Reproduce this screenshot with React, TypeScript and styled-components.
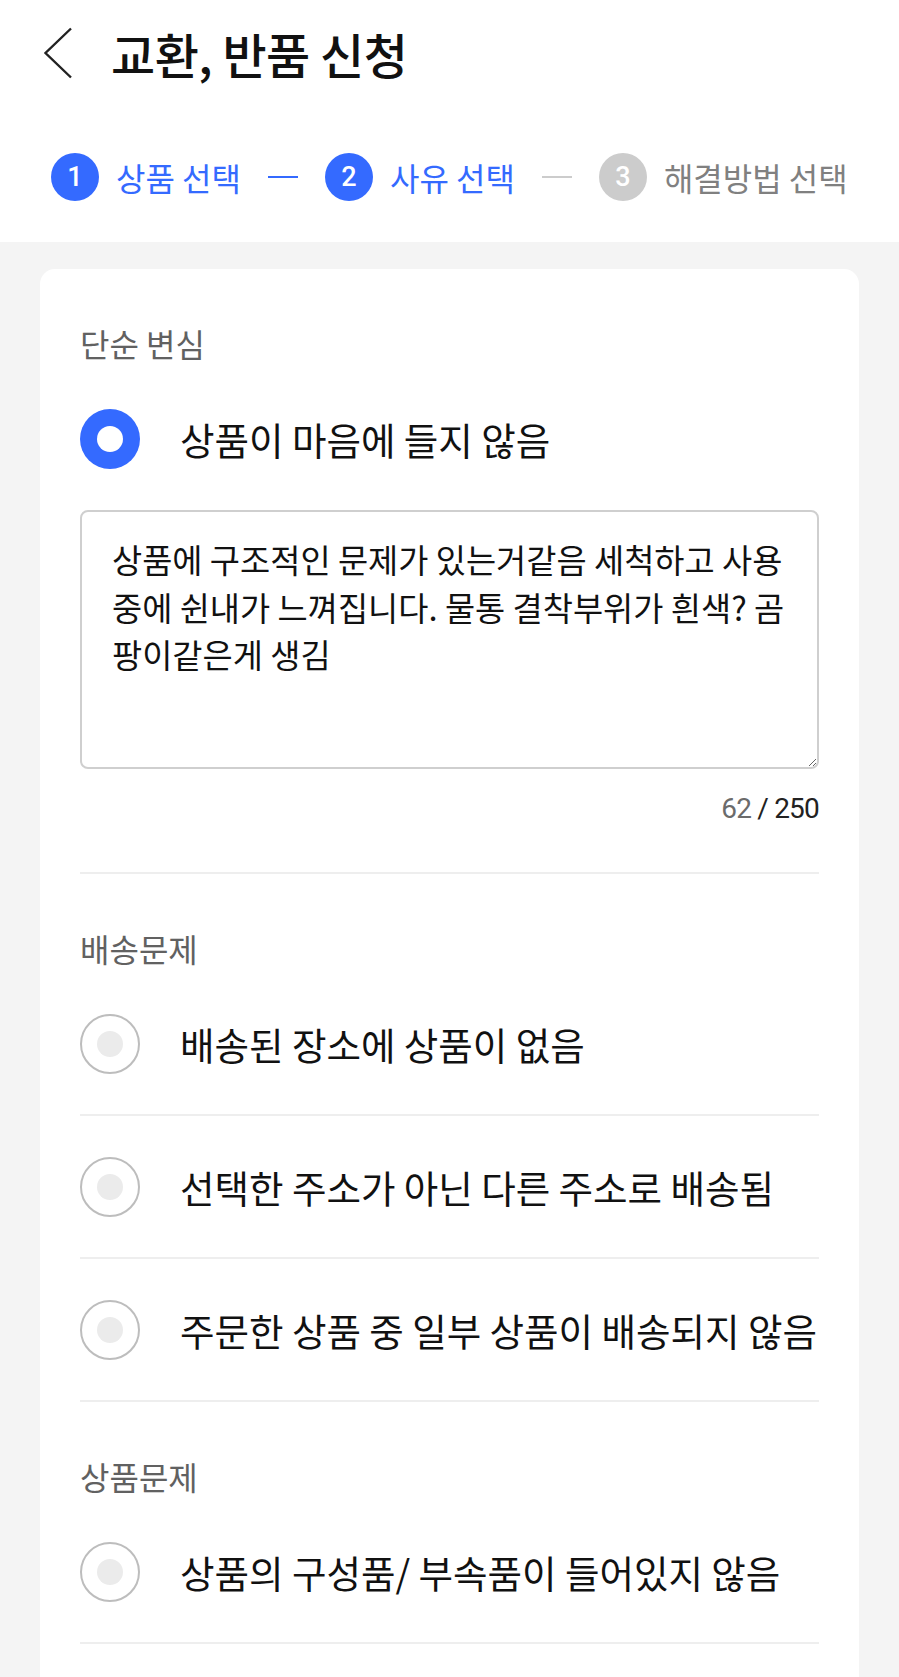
import React from 'react'
import styled, {createGlobalStyle} from 'styled-components'

const BLUE = '#346aff'

const GlobalStyle = createGlobalStyle`
  html, body {
    margin: 0;
    padding: 0;
    background: #f4f4f4;
  }
  body {
    font-family: 'Roboto', 'Noto Sans CJK KR', sans-serif;
    color: #111;
  }
  * { box-sizing: border-box; }
`

const Header = styled.header`
  background: #fff;
  height: 242px;
`

const TopBar = styled.div`
  height: 106px;
  display: flex;
  align-items: center;
  padding-left: 43px;
  gap: 38px;
`

const BackButton = styled.button`
  border: 0;
  background: none;
  padding: 0;
  display: flex;
  width: 30px;
  height: 52px;
  color: #222;
`

const Title = styled.h1`
  margin: 0;
  font-family: 'Noto Sans CJK KR', sans-serif;
  font-size: 48px;
  font-weight: 500;
  line-height: 1;
  color: #111;
  letter-spacing: -0.5px;
`

const Steps = styled.ol`
  list-style: none;
  margin: 0;
  padding: 47px 0 0 51px;
  display: flex;
  align-items: center;
`

const Step = styled.li`
  display: flex;
  align-items: center;
  gap: 17px;
`

const StepNum = styled.span<{$on: boolean}>`
  width: 48px;
  height: 48px;
  border-radius: 50%;
  background: ${p => (p.$on ? BLUE : '#cccccc')};
  color: #fff;
  display: flex;
  align-items: center;
  justify-content: center;
  font-family: 'Roboto', sans-serif;
  font-size: 27px;
  font-weight: 500;
`

const StepLabel = styled.span<{$on: boolean}>`
  font-family: 'Noto Sans CJK KR', sans-serif;
  font-size: 32px;
  line-height: 48px;
  color: ${p => (p.$on ? BLUE : '#808080')};
`

const Connector = styled.li<{$on: boolean}>`
  width: 30px;
  height: 2px;
  margin: 0 27px;
  background: ${p => (p.$on ? BLUE : '#cccccc')};
`

const Body = styled.main`
  padding: 27px 40px 0;
`

const Card = styled.div`
  background: #fff;
  border-radius: 15px 15px 0 0;
  padding: 0 40px 40px;
`

const Section = styled.section``

const SectionTitle = styled.h2`
  margin: 0 0 7px;
  padding-top: 56px;
  font-family: 'Noto Sans CJK KR', sans-serif;
  font-size: 32px;
  font-weight: 400;
  line-height: 36px;
  color: #616161;
`

const Option = styled.div<{$last?: boolean}>`
  border-bottom: ${p => (p.$last ? '0' : '2px solid #eeeeee')};
`

const OptionRow = styled.label`
  height: 141px;
  display: flex;
  align-items: center;
  gap: 40px;
  cursor: pointer;
`

const Radio = styled.span<{$checked: boolean}>`
  flex: none;
  width: 60px;
  height: 60px;
  border-radius: 50%;
  display: flex;
  align-items: center;
  justify-content: center;
  background: ${p => (p.$checked ? BLUE : '#fff')};
  border: ${p => (p.$checked ? '0' : '2px solid #bdbdbd')};

  &::after {
    content: '';
    width: 26px;
    height: 26px;
    border-radius: 50%;
    background: ${p => (p.$checked ? '#fff' : '#ebebeb')};
  }
`

const OptionLabel = styled.span`
  font-family: 'Noto Sans CJK KR', sans-serif;
  font-size: 37.5px;
  color: #111;
  white-space: nowrap;
`

const Detail = styled.div`
  padding: 1px 0 45px;
`

const TextArea = styled.textarea`
  display: block;
  width: 100%;
  height: 259px;
  border: 2px solid #cfcfcf;
  border-radius: 8px;
  padding: 23px 18px 23px 30px;
  font-family: 'Noto Sans CJK KR', sans-serif;
  font-size: 32.8px;
  line-height: 47.5px;
  color: #111;
  outline: none;
  resize: vertical;
`

const Counter = styled.div`
  margin-top: 22px;
  text-align: right;
  font-family: 'Roboto', sans-serif;
  font-size: 28px;
  line-height: 36px;
  color: #222;
  letter-spacing: -0.8px;

  span {
    color: #6b6b6b;
  }
`

const BackIcon = () => (
  <svg width="30" height="52" viewBox="0 0 30 52" fill="none">
    <polyline points="28,1.5 2.5,26 28,50.5" stroke="currentColor" strokeWidth="2.4" strokeLinejoin="miter" />
  </svg>
)

const memo = '상품에 구조적인 문제가 있는거같음 세척하고 사용 중에 쉰내가 느껴집니다. 물통 결착부위가 흰색? 곰팡이같은게 생김'

type Group = {
  title: string
  options: string[]
}

const groups: Group[] = [
  {title: '배송문제', options: ['배송된 장소에 상품이 없음', '선택한 주소가 아닌 다른 주소로 배송됨', '주문한 상품 중 일부 상품이 배송되지 않음']},
  {title: '상품문제', options: ['상품의 구성품/ 부속품이 들어있지 않음']},
]

const App = () => {
  const steps = [
    {n: 1, label: '상품 선택', on: true},
    {n: 2, label: '사유 선택', on: true},
    {n: 3, label: '해결방법 선택', on: false},
  ]

  return (
    <>
      <GlobalStyle />
      <Header>
        <TopBar>
          <BackButton aria-label="뒤로">
            <BackIcon />
          </BackButton>
          <Title>교환, 반품 신청</Title>
        </TopBar>
        <Steps>
          {steps.map((s, i) => (
            <React.Fragment key={s.n}>
              {i > 0 && <Connector $on={s.on} />}
              <Step>
                <StepNum $on={s.on}>{s.n}</StepNum>
                <StepLabel $on={s.on}>{s.label}</StepLabel>
              </Step>
            </React.Fragment>
          ))}
        </Steps>
      </Header>
      <Body>
        <Card>
          <Section>
            <SectionTitle>단순 변심</SectionTitle>
            <Option>
              <OptionRow>
                <Radio $checked={true} />
                <OptionLabel>상품이 마음에 들지 않음</OptionLabel>
              </OptionRow>
              <Detail>
                <TextArea readOnly defaultValue={memo} />
                <Counter><span>62</span> / 250</Counter>
              </Detail>
            </Option>
          </Section>
          {groups.map(g => (
            <Section key={g.title}>
              <SectionTitle>{g.title}</SectionTitle>
              {g.options.map(o => (
                <Option key={o}>
                  <OptionRow>
                    <Radio $checked={false} />
                    <OptionLabel>{o}</OptionLabel>
                  </OptionRow>
                </Option>
              ))}
            </Section>
          ))}
        </Card>
      </Body>
    </>
  )
}

export default App
